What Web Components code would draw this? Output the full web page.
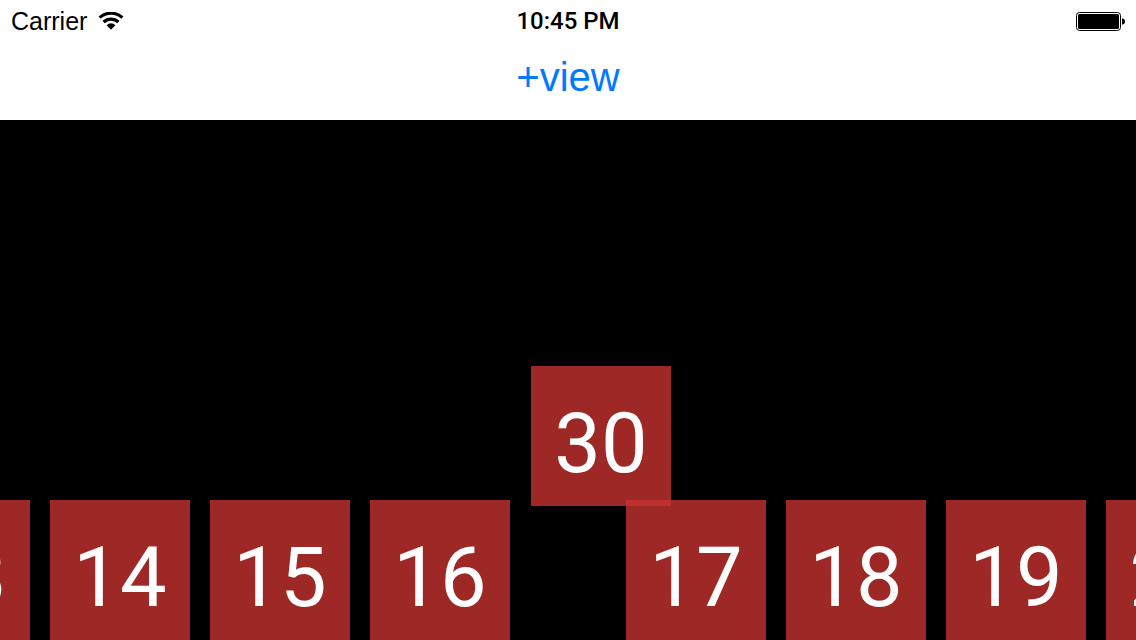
<!DOCTYPE html>
<html lang="en">
<head>
<meta charset="utf-8">
<meta name="viewport" content="width=device-width, initial-scale=1">
<title>Tile dock</title>
<style>
  body { margin: 0; font-family: "Liberation Sans", Arial, sans-serif; background: #fff; }
</style>
</head>
<body>
<dock-app></dock-app>
<script>
const define = (name, html) => customElements.define(name, class extends HTMLElement {
  constructor() {
    super();
    this.attachShadow({ mode: "open" }).innerHTML = html;
  }
});

define("wifi-icon", `
  <style>:host { display: block; width: 26px; height: 18px; } svg { display: block; }</style>
  <svg width="26" height="18" viewBox="0 0 26 18" aria-hidden="true">
    <path d="M1.6 5.7A16.5 16.5 0 0 1 24.4 5.7" fill="none" stroke="#000" stroke-width="3.2"/>
    <path d="M5.6 10A10.8 10.8 0 0 1 20.4 10" fill="none" stroke="#000" stroke-width="3.2"/>
    <path d="M8.6 13.2A6 6 0 0 1 17.4 13.2L13 17.8Z"/>
  </svg>`);

define("battery-icon", `
  <style>:host { display: block; width: 49px; height: 19px; } svg { display: block; }</style>
  <svg width="49" height="19" viewBox="0 0 49 19" aria-hidden="true">
    <rect x=".5" y=".5" width="44" height="18" rx="3" fill="#fff" stroke="#000"/>
    <rect x="2" y="2" width="41" height="15" rx="1.5"/>
    <path d="M46 6.2Q49 6.8 49 9.5T46 12.8Z"/>
  </svg>`);

define("status-bar", `
  <style>
    :host { display: grid; grid-template-columns: 1fr auto 1fr; align-items: center; height: 40px; padding: 0 11px; color: #000; }
    .carrier { display: flex; align-items: center; gap: 11px; font-size: 25px; line-height: 42px; }
    .time { font: 500 24px/42px Roboto, "Liberation Sans", sans-serif; }
    battery-icon { justify-self: end; }
  </style>
  <div class="carrier"><span>Carrier</span><wifi-icon></wifi-icon></div>
  <time class="time">10:45 PM</time>
  <battery-icon></battery-icon>`);

define("tool-bar", `
  <style>
    :host { display: flex; justify-content: center; align-items: center; height: 80px; }
    button { border: 0; background: none; padding: 0 0 6px; font: 40px/48px "Liberation Sans", Arial, sans-serif; color: #007aff; cursor: pointer; }
  </style>
  <button type="button">+view</button>`);

define("number-tile", `
  <style>
    :host { display: block; flex: none; box-sizing: border-box; width: 140px; height: 140px; padding-top: 14px;
      background: rgb(198 50 46 / .8); color: #fff; text-align: center;
      font: 83px/128px Roboto, "Liberation Sans", sans-serif; }
  </style>
  <slot></slot>`);

define("tile-dock", `
  <style>
    :host { display: grid; grid-template-columns: 1fr 1fr; column-gap: 116px; }
    .side { display: flex; gap: 20px; min-width: 0; }
    .before { justify-content: flex-end; }
  </style>
  <div class="side before"><slot name="before"></slot></div>
  <div class="side"><slot></slot></div>`);

define("dock-stage", `
  <style>
    :host { display: flex; flex-direction: column; justify-content: flex-end; flex: 1; position: relative;
      min-height: 280px; overflow: hidden; background: #000; }
    ::slotted([slot="dragged"]) { position: absolute; left: calc(50% - 37px); bottom: 134px; }
  </style>
  <slot name="dragged"></slot>
  <slot></slot>`);

define("dock-app", `
  <style>:host { display: flex; flex-direction: column; min-height: 100vh; }</style>
  <status-bar></status-bar>
  <tool-bar></tool-bar>
  <dock-stage>
    <number-tile slot="dragged">30</number-tile>
    <tile-dock>
      <number-tile slot="before">13</number-tile>
      <number-tile slot="before">14</number-tile>
      <number-tile slot="before">15</number-tile>
      <number-tile slot="before">16</number-tile>
      <number-tile>17</number-tile>
      <number-tile>18</number-tile>
      <number-tile>19</number-tile>
      <number-tile>20</number-tile>
    </tile-dock>
  </dock-stage>`);
</script>
</body>
</html>
